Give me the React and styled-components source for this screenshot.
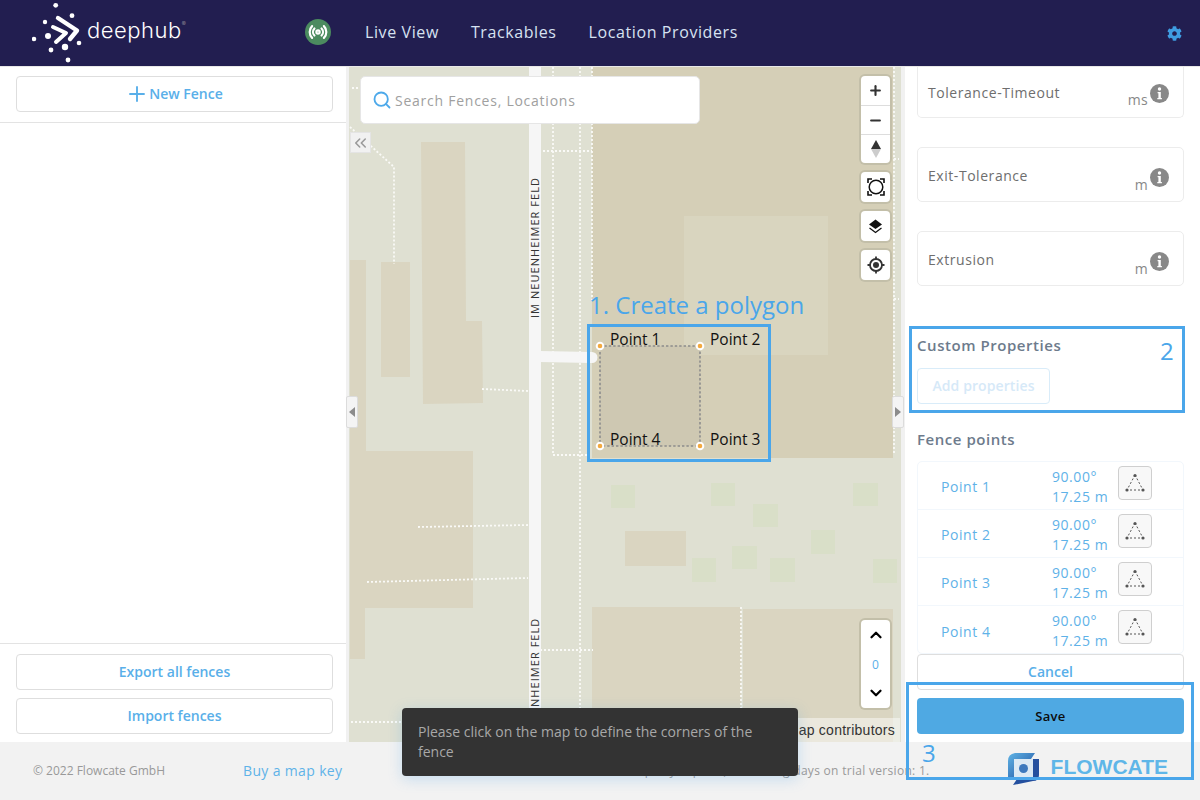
import React from "react";
import styled, { createGlobalStyle } from "styled-components";
import { Plus, Minus, Search, ChevronUp, ChevronDown, ChevronsLeft, Radio } from "lucide-react";
import { FaCog } from "react-icons/fa";

const Global = createGlobalStyle`
  html, body { margin: 0; padding: 0; }
  body { font-family: "Open Sans", "Noto Sans", sans-serif; background: #fff; }
  * { box-sizing: border-box; }
`;

const Page = styled.div`
  position: relative; width: 1200px; height: 800px; overflow: hidden;
  display: flex; flex-direction: column; letter-spacing: .3px;
`;
const Header = styled.header`
  height: 67px; flex: none; background: #221e50; border-bottom: 1px solid #e8e8e8;
  display: flex; align-items: center; padding: 0 18px 2px 32px;
`;
const Brand = styled.div`
  display: flex; align-items: center; width: 273px; height: 66px; margin-top: 1px;
`;
const BrandName = styled.span`
  font-family: "Inter", sans-serif; font-weight: 300; font-size: 22px; color: #fff;
  letter-spacing: .5px; margin: -6px 0 0 1px; line-height: 1;
`;
const Reg = styled.sup`
  font-size: 6px; color: #aaa; letter-spacing: 0; position: relative; top: -12px; vertical-align: baseline;
`;
const LiveBadge = styled.div`
  width: 26px; height: 26px; border-radius: 50%; background: #4b8b5f; color: #fff;
  display: flex; align-items: center; justify-content: center; margin-right: 34px;
`;
const Nav = styled.nav`
  display: flex; gap: 32px;
`;
const NavItem = styled.a`
  color: #d7e2f2; font-size: 16px; font-weight: 500; letter-spacing: .6px;
`;
const Gear = styled.div`
  margin-left: auto; color: #3f9de2; display: flex; margin-top: 2px;
`;
const Main = styled.main`
  flex: none; height: 675px; display: flex;
`;
const Sidebar = styled.aside`
  width: 349px; flex: none; border-right: 3px solid #f1f1f1; display: flex; flex-direction: column;
`;
const SideTop = styled.div`
  padding: 9px 13px 10px 16px; border-bottom: 1px solid #e3e3e3;
`;
const SideBottom = styled.div`
  margin-top: auto; padding: 10px 13px 8px 16px; border-top: 1px solid #e3e3e3;
  display: flex; flex-direction: column; gap: 8px;
`;
const OutlineBtn = styled.button`
  width: 100%; height: 36px; background: #fff; border: 1px solid #dedede; border-radius: 4px;
  color: #59afe9; font: 600 14px "Open Sans", sans-serif; letter-spacing: 0;
  display: flex; align-items: center; justify-content: center; padding: 0 0 2px ${p => p.$pl || 0}px;
  svg { margin: 2px 0 0 -5px; }
`;
const MapArea = styled.section`
  position: relative; z-index: 1; width: 552px; flex: none; background: #dfe0d2;
`;
const MapSvg = styled.svg`
  display: block; width: 552px; height: 675px;
`;
const SearchBox = styled.div`
  position: absolute; left: 11px; top: 9px; width: 340px; height: 48px; background: #fff;
  border: 1px solid #e6e6e6; border-radius: 5px; display: flex; align-items: center; gap: 3px; padding-left: 11px;
  color: #4da9ea;
`;
const Placeholder = styled.span`
  color: #a0a0a0; font-size: 14px; letter-spacing: .75px;
`;
const Collapse = styled.div`
  position: absolute; left: 1px; top: 65px; width: 21px; height: 21px; background: #f1f1f1;
  border: 1px solid #e4e4e4; color: #9a9a9a; display: flex; align-items: center; justify-content: center;
`;
const SideToggle = styled.div`
  position: absolute; top: 329px; ${p => p.$right ? "right: -3px;" : "left: -3px;"}
  width: 12px; height: 32px; background: #f4f4f4; border: 1px solid #dcdcdc; border-radius: 2px;
  display: flex; align-items: center; justify-content: center;
`;
const Tri = styled.span`
  width: 0; height: 0; border-top: 5px solid transparent; border-bottom: 5px solid transparent;
  ${p => p.$right ? "border-left: 6px solid #8c8c8c;" : "border-right: 6px solid #8c8c8c;"}
`;
const Controls = styled.div`
  position: absolute; right: 11px; top: 9px; display: flex; flex-direction: column; gap: 9px; width: 29px;
`;
const Group = styled.div`
  background: #fff; border-radius: 4px; box-shadow: 0 0 0 2px #c3bfa9; display: flex; flex-direction: column;
`;
const Ctl = styled.div`
  height: 29px; display: flex; align-items: center; justify-content: center; color: #333;
  & + & { border-top: 1px solid #ddd; }
  &:only-child { height: 30px; }
`;
const FloorCtl = styled(Group)`
  position: absolute; right: 11px; bottom: 34px; width: 29px; height: 88px; justify-content: space-between;
  align-items: center; padding: 6px 0; color: #000;
`;
const FloorNum = styled.span`
  color: #59afe9; font-size: 12px;
`;
const Attribution = styled.div`
  position: absolute; right: 1px; bottom: 0; height: 24px; padding: 0 5px 0 5px; background: rgba(255,255,255,.45);
  font: 14px "Liberation Sans", sans-serif; color: #333; display: flex; align-items: center; letter-spacing: .25px;
`;
const PointLabel = styled.span`
  position: absolute; font-size: 15.5px; font-weight: 500; color: #111; line-height: 20px; letter-spacing: 0;
  left: ${p => p.$x}px; top: ${p => p.$y}px;
`;
const RightPanel = styled.aside`
  width: 299px; flex: none; border-left: 4px solid #f1f1f1; padding: 0 16px 8px 12px;
  display: flex; flex-direction: column;
`;
const FieldCard = styled.div`
  position: relative; height: ${p => p.$h || 55}px; margin-top: ${p => p.$mt || 0}px; flex: none;
  border: 1px solid #ececec; border-radius: 5px; ${p => p.$cut && "border-top: none; border-radius: 0 0 5px 5px;"}
  display: flex; align-items: center; padding: 0 14px 0 10px;
`;
const FieldLabel = styled.span`
  font-size: 14px; color: #6e6e6e; flex: 1; margin-top: 1px; letter-spacing: .55px;
`;
const Unit = styled.span`
  font-size: 14px; color: #888; margin: ${p => p.$cut ? 15 : 21}px 2px 0 0; line-height: 20px;
`;
const InfoIcon = styled.svg`
  width: 19px; height: 19px; flex: none; margin-top: ${p => p.$cut ? 2 : 5}px;
`;
const SectionTitle = styled.div`
  font-size: 15px; font-weight: 600; color: #6d7b8c; line-height: 20px; margin-top: ${p => p.$mt}px; flex: none;
  letter-spacing: .55px;
`;
const AddBtn = styled.button`
  width: 133px; height: 36px; margin-top: 13px; flex: none; background: #fff; border: 1px solid #d9ecf9; border-radius: 4px;
  color: #d6e9f8; font: 600 14px "Open Sans", sans-serif; letter-spacing: .1px; padding: 0 0 2px;
`;
const PointList = styled.div`
  height: 193px; margin-top: 12px; flex: none; border: 1px solid #f2f7fc; border-radius: 5px;
  display: flex; flex-direction: column;
`;
const PointRow = styled.div`
  height: 48px; flex: none; display: flex; align-items: center; padding: 2px 0 0 23px; color: #5fb2e8; font-size: 14px;
  letter-spacing: .55px; border-bottom: 1px solid #f2f7fc;
  &:last-child { border-bottom: none; }
`;
const PointName = styled.span`
  width: 111px; flex: none;
`;
const Coords = styled.div`
  width: 66px; line-height: 20px; flex: none;
`;
const TriBtn = styled.div`
  width: 34px; height: 34px; flex: none; background: #f8f8f8; border: 1px solid #cfcfcf; border-radius: 4px;
  display: flex; align-items: center; justify-content: center; align-self: flex-start; margin-top: 2px;
`;
const SaveBtn = styled.button`
  height: 36px; margin-top: 8px; flex: none; width: 100%; background: #4fa9e3; border: none; border-radius: 4px;
  color: #0c0c0c; font: 600 13px "Open Sans", sans-serif; letter-spacing: .3px;
`;
const Footer = styled.footer`
  flex: 1; background: #f2f2f2; display: flex; align-items: center; padding: 0 32px 2px 33px; color: #999;
`;
const Copy = styled.span`
  font-size: 12px; width: 210px; letter-spacing: 0;
`;
const KeyLink = styled.a`
  font-size: 14px; color: #5fb2e8; letter-spacing: .35px;
`;
const Trial = styled.span`
  margin-left: auto; font-size: 12px; margin-right: 78px; letter-spacing: .3px;
`;
const FlowLogo = styled.div`
  display: flex; align-items: center; gap: 11px; margin-top: -3px;
`;
const FlowName = styled.span`
  font: 700 21px "Liberation Sans", sans-serif; color: #5fb6e8; letter-spacing: 0; margin-top: -3px;
`;
const Toast = styled.div`
  position: absolute; z-index: 3; left: 402px; top: 708px; width: 396px; height: 68px; background: #333; border-radius: 4px;
  color: #a8a8a8; font-size: 14px; line-height: 20px; padding: 14px 16px; letter-spacing: 0;
  box-shadow: 0 3px 14px rgba(80,160,230,.28);
`;
const Box = styled.div`
  position: absolute; left: ${p => p.$x}px; top: ${p => p.$y}px; width: ${p => p.$w}px; height: ${p => p.$h}px;
  border: 3px solid #4aa6ea; pointer-events: none; z-index: 2;
`;
const Note = styled.span`
  position: absolute; left: ${p => p.$x}px; top: ${p => p.$y}px; color: #4aa6ea; font-size: 24px; line-height: 32px;
  letter-spacing: 0; white-space: nowrap; z-index: 2;
`;

const Logo = () => (
  <svg width="54" height="66" viewBox="32 0 54 66" fill="#fff">
    {[[55.7,5.3,2.4],[72,15.7,2.4],[45,22,2.2],[34,39,2.3],[48,36,3],[51,50,2.4],[65,47,3.2],[79,43,2.3],[68,60,2.4]].map(([x,y,r],i)=>(
      <circle key={i} cx={x} cy={y} r={r} />
    ))}
    <path d="M58 18 L77 30.5 L70 39" fill="none" stroke="#fff" strokeWidth="4.4" strokeLinecap="round" strokeLinejoin="round" />
    <path d="M53 27 L66 33 L56 42" fill="none" stroke="#fff" strokeWidth="4" strokeLinecap="round" strokeLinejoin="round" />
  </svg>
);

const Info = ({ cut }) => (
  <InfoIcon viewBox="0 0 19 19" $cut={cut}>
    <circle cx="9.5" cy="9.5" r="9.5" fill="#888" />
    <circle cx="9.5" cy="5" r="1.7" fill="#fff" />
    <path d="M7.6 8h3.2v6h1.1v1.3H7.3V14h1.1V9.3H7.6z" fill="#fff" />
  </InfoIcon>
);

const TriIcon = () => (
  <svg width="22" height="22" viewBox="0 0 22 22">
    <path d="M11 3 L19 18 L3 18 Z" fill="none" stroke="#555" strokeWidth="1" strokeDasharray="2 2" />
    <circle cx="11" cy="3.5" r="1.6" fill="#555" /><circle cx="3" cy="18" r="1.6" fill="#555" /><circle cx="19" cy="18" r="1.6" fill="#555" />
  </svg>
);

const buildings = [
  ["350","260","16","192"],["381","262","29","115"],["350","451","123","157"],["350","607","15","52"],
  ["625","531","61","35"],
];
const greens = [[611,485,24,23],[711,483,24,23],[753,504,25,23],[853,483,25,23],[811,530,24,24],[732,546,25,23],[692,558,24,24],[770,558,25,24],[873,559,24,24]];
const dotted = [
  "M553 67 V455 H587","M580 67 V742","M592 67 V300","M543 151 H592","M350 127 L394 167 V264","M352 88 H362",
  "M482 389 L528 391","M418 527 L528 525","M367 582 L528 578","M540 650 H593","M351 722 H402","M741 607 V742","M894 67 V455","M894 159 H899","M894 299 H899",
];

const MapDrawing = () => (
  <MapSvg viewBox="349 67 552 675">
    <rect x="349" y="67" width="552" height="675" fill="#dfe0d2" />
    <rect x="592" y="67" width="301" height="391" fill="#d5cfb7" />
    <rect x="684" y="216" width="144" height="139" fill="#d9d5bf" />
    {buildings.map(([x,y,w,h],i)=><rect key={i} x={x} y={y} width={w} height={h} fill="#dad5c1" />)}
    <path d="M421 142 H465 L466 321 H482 L483 403 L423 404 Z" fill="#dad5c1" />
    <rect x="592" y="607" width="149" height="135" fill="#dad5c1" />
    <rect x="743" y="609" width="150" height="133" fill="#dad5c1" />
    {greens.map(([x,y,w,h],i)=><rect key={i} x={x} y={y} width={w} height={h} fill="#d9dfc8" />)}
    {dotted.map((d,i)=><path key={i} d={d} fill="none" stroke="#fafaf7" strokeWidth="1.8" strokeDasharray="2 2" />)}
    <rect x="529" y="67" width="12" height="675" fill="#f6f6f6" />
    <path d="M540 351 L592 352 A5.5 5.5 0 0 1 592 363 L540 362 Z" fill="#f6f6f6" />
    <g fontFamily="'Open Sans', sans-serif" fontSize="11" fill="#333" letterSpacing="1.05" textAnchor="start">
      <text transform="translate(539 318) rotate(-90)">IM NEUENHEIMER FELD</text>
      <text transform="translate(539 707) rotate(-90)">NHEIMER FELD</text>
    </g>
    <rect x="600" y="346" width="100" height="100" fill="#cec8b2" />
    <rect x="600" y="346" width="100" height="100" fill="none" stroke="#8c8c8c" strokeWidth="1.6" strokeDasharray="2.4 2" />
    {[[600,346],[700,346],[700,446],[600,446]].map(([x,y],i)=>(
      <circle key={i} cx={x} cy={y} r="3.3" fill="#f3a93f" stroke="#fff" strokeWidth="2" />
    ))}
  </MapSvg>
);

const points = ["Point 1","Point 2","Point 3","Point 4"];

export default function App() {
  return (
    <Page>
      <Global />
      <Header>
        <Brand>
          <Logo />
          <BrandName>deephub<Reg>®</Reg></BrandName>
        </Brand>
        <LiveBadge><Radio size={20} strokeWidth={2.6} /></LiveBadge>
        <Nav>
          <NavItem>Live View</NavItem>
          <NavItem>Trackables</NavItem>
          <NavItem>Location Providers</NavItem>
        </Nav>
        <Gear><FaCog size={15} /></Gear>
      </Header>
      <Main>
        <Sidebar>
          <SideTop><OutlineBtn $pl={4}><Plus size={24} strokeWidth={1.9} />New Fence</OutlineBtn></SideTop>
          <SideBottom>
            <OutlineBtn>Export all fences</OutlineBtn>
            <OutlineBtn>Import fences</OutlineBtn>
          </SideBottom>
        </Sidebar>
        <MapArea>
          <MapDrawing />
          <SearchBox>
            <Search size={20} strokeWidth={2.2} />
            <Placeholder>Search Fences, Locations</Placeholder>
          </SearchBox>
          <Collapse><ChevronsLeft size={22} strokeWidth={2} /></Collapse>
          <SideToggle><Tri /></SideToggle>
          <SideToggle $right><Tri $right /></SideToggle>
          <Controls>
            <Group>
              <Ctl><Plus size={15} strokeWidth={3.4} /></Ctl>
              <Ctl><Minus size={15} strokeWidth={3.4} /></Ctl>
              <Ctl>
                <svg width="12" height="20" viewBox="0 0 12 20"><path d="M6 1 L11 10 H1 Z" fill="#333" /><path d="M6 19 L11 10 H1 Z" fill="#ccc" /></svg>
              </Ctl>
            </Group>
            <Group>
              <Ctl>
                <svg width="18" height="18" viewBox="0 0 18 18">
                  <circle cx="9" cy="9" r="6.8" fill="none" stroke="#111" strokeWidth="1.5" />
                  <path d="M1 5 V1 H5 M13 1 H17 V5 M17 13 V17 H13 M5 17 H1 V13" fill="none" stroke="#111" strokeWidth="1.6" />
                </svg>
              </Ctl>
            </Group>
            <Group>
              <Ctl>
                <svg width="15" height="15" viewBox="0 0 15 15">
                  <path d="M7.5 0.5 L14 5.5 L7.5 10 L1 5.5 Z" fill="#111" />
                  <path d="M1.5 9 L7.5 13.5 L13.5 9" fill="none" stroke="#111" strokeWidth="1.3" />
                </svg>
              </Ctl>
            </Group>
            <Group>
              <Ctl>
                <svg width="18" height="18" viewBox="0 0 18 18">
                  <circle cx="9" cy="9" r="6" fill="none" stroke="#333" strokeWidth="1.8" />
                  <circle cx="9" cy="9" r="3" fill="#333" />
                  <path d="M9 0.5 V3.5 M9 14.5 V17.5 M0.5 9 H3.5 M14.5 9 H17.5" stroke="#333" strokeWidth="1.8" />
                </svg>
              </Ctl>
            </Group>
          </Controls>
          <FloorCtl>
            <ChevronUp size={18} strokeWidth={3} />
            <FloorNum>0</FloorNum>
            <ChevronDown size={18} strokeWidth={3} />
          </FloorCtl>
          <Attribution>© OpenStreetMap contributors</Attribution>
          <PointLabel $x={261} $y={262}>Point 1</PointLabel>
          <PointLabel $x={361} $y={262}>Point 2</PointLabel>
          <PointLabel $x={261} $y={362}>Point 4</PointLabel>
          <PointLabel $x={361} $y={362}>Point 3</PointLabel>
        </MapArea>
        <RightPanel>
          <FieldCard $cut $h={51}><FieldLabel>Tolerance-Timeout</FieldLabel><Unit $cut>ms</Unit><Info cut /></FieldCard>
          <FieldCard $mt={29}><FieldLabel>Exit-Tolerance</FieldLabel><Unit>m</Unit><Info /></FieldCard>
          <FieldCard $mt={29}><FieldLabel>Extrusion</FieldLabel><Unit>m</Unit><Info /></FieldCard>
          <SectionTitle $mt={49}>Custom Properties</SectionTitle>
          <AddBtn>Add properties</AddBtn>
          <SectionTitle $mt={25}>Fence points</SectionTitle>
          <PointList>
            {points.map(p => (
              <PointRow key={p}>
                <PointName>{p}</PointName>
                <Coords>90.00°<br />17.25 m</Coords>
                <TriBtn><TriIcon /></TriBtn>
              </PointRow>
            ))}
          </PointList>
          <OutlineBtn>Cancel</OutlineBtn>
          <SaveBtn>Save</SaveBtn>
        </RightPanel>
      </Main>
      <Footer>
        <Copy>© 2022 Flowcate GmbH</Copy>
        <KeyLink>Buy a map key</KeyLink>
        <Trial>Map key expired, remaining days on trial version: 1.</Trial>
        <FlowLogo>
          <svg width="32" height="32" viewBox="0 0 32 32">
            <defs>
              <linearGradient id="fl" x1="0" y1="0" x2="1" y2="1"><stop offset="0" stopColor="#5fb4e6" /><stop offset="1" stopColor="#1d4c9c" /></linearGradient>
            </defs>
            <path d="M7 0 H27 L23 6 H13 Q6 6 6 12 V26 H0 V8 Q0 1 7 0 Z" fill="url(#fl)" />
            <path d="M25 6 H31 V22 Q31 28 25 28 L5 32 L9 26 H20 Q25 26 25 20 Z" fill="#24509f" />
            <rect x="6" y="6" width="19" height="20" fill="#dbe9f4" />
            <circle cx="15.5" cy="15.5" r="4.5" fill="#3c78bd" />
          </svg>
          <FlowName>FLOWCATE</FlowName>
        </FlowLogo>
      </Footer>
      <Toast>Please click on the map to define the corners of the fence</Toast>
      <Note $x={589} $y={289}>1. Create a polygon</Note>
      <Box $x={587} $y={324} $w={184} $h={138} />
      <Box $x={909} $y={326} $w={276} $h={87} />
      <Note $x={1160} $y={335}>2</Note>
      <Box $x={906} $y={682} $w={288} $h={98} />
      <Note $x={922} $y={737}>3</Note>
    </Page>
  );
}
